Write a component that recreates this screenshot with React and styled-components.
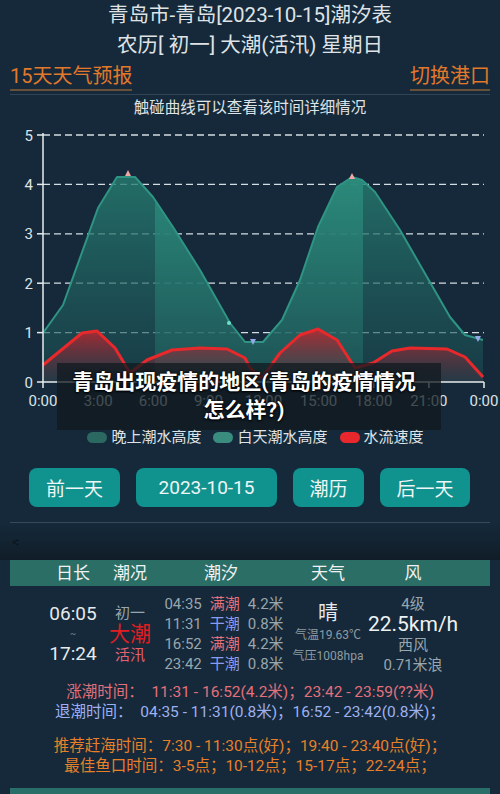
import React from "react";
import styled, { createGlobalStyle } from "styled-components";

const GlobalStyle = createGlobalStyle`
  html, body { margin: 0; padding: 0; background: #15293a; }
  body { font-family: Roboto, "Noto Sans CJK SC", sans-serif; }
`;

const Page = styled.div`
  width: 500px;
  height: 794px;
  overflow: hidden;
  background: #15293a;
  color: #dfe3e6;
`;

const Title = styled.div`
  text-align: center;
  font-size: 20.5px;
  line-height: 30px;
  color: #dfe3e6;
  white-space: nowrap;
`;

const LinksRow = styled.div`
  display: flex;
  justify-content: space-between;
  margin: 0 10px;
  padding-bottom: 3px;
  border-bottom: 1px solid #2f4556;
`;

const Link = styled.div`
  font-size: 20px;
  line-height: 24px;
  padding: 4px 0 1px;
  color: #e2782a;
  border-bottom: 2px solid #6a5036;
`;

const Hint = styled.div`
  text-align: center;
  font-size: 15.5px;
  line-height: 20px;
  margin-top: 3px;
  color: #dfe3e6;
`;

const ChartWrap = styled.div`
  position: relative;
  height: 309px;
`;

const ChartSvg = styled.svg`
  display: block;
`;

const Overlay = styled.div`
  position: absolute;
  top: 245px;
  left: 57px;
  width: 384px;
  height: 67px;
  box-sizing: border-box;
  padding-top: 5px;
  padding-right: 10px;
  background: rgba(16, 24, 30, 0.74);
  text-align: center;
  font-size: 21px;
  line-height: 28px;
  font-weight: 700;
  color: #ffffff;
  text-shadow: 0 0 3px #000, 0 1px 2px #000;
  white-space: nowrap;
`;

const Legend = styled.div`
  display: flex;
  justify-content: center;
  padding-left: 11px;
  gap: 12px;
  font-size: 15px;
  line-height: 20px;
  color: #dfe3e6;
`;

const LegendItem = styled.div`
  display: flex;
  align-items: center;
  gap: 4px;
`;

const Swatch = styled.span`
  display: inline-block;
  width: 20px;
  height: 11px;
  border-radius: 6px;
  background: ${(p) => p.$color};
`;

const ButtonRow = styled.div`
  display: flex;
  gap: 16px;
  margin-top: 21px;
  padding-left: 29px;
`;

const Button = styled.div`
  width: ${(p) => p.$w}px;
  height: 39px;
  border-radius: 8px;
  background: #10928f;
  color: #eef6f6;
  font-size: 19px;
  display: flex;
  align-items: center;
  justify-content: center;
`;

const Divider = styled.div`
  margin: 15px 10px 0;
  height: 1px;
  background: #34495a;
`;

const BackRow = styled.div`
  height: 37px;
  padding-left: 12px;
  display: flex;
  align-items: center;
  font-size: 15px;
  color: #0b141b;
  background: linear-gradient(#15293a, #101d28);
`;

const gridCols = `
  display: grid;
  grid-template-columns: 66px 48px 134px 80px 90px;
  padding-left: 30px;
`;

const TableHead = styled.div`
  ${gridCols}
  margin: 0 10px;
  height: 26px;
  background: #2a6e66;
  font-size: 17px;
  line-height: 26px;
  color: #f0f2f2;
  text-align: center;
`;

const DataRow = styled.div`
  ${gridCols}
  margin: 6px 10px 0;
  height: 84px;
`;

const Col = styled.div`
  display: flex;
  flex-direction: column;
  align-items: center;
  justify-content: center;
  white-space: nowrap;
`;

const Txt = styled.span`
  font-size: ${(p) => p.$s || 15}px;
  line-height: ${(p) => p.$lh || 20}px;
  color: ${(p) => p.$c || "#9aa6ad"};
`;

const TideGrid = styled.div`
  display: grid;
  grid-template-columns: auto auto auto;
  column-gap: 8px;
  font-size: 15px;
  line-height: 20px;
  color: #9aa6ad;
  padding-left: 6px;
`;

const TideStatus = styled.span`
  color: ${(p) => (p.$high ? "#e8707a" : "#8b9cf0")};
`;

const InfoBlock = styled.div`
  margin-top: ${(p) => p.$mt}px;
  text-align: center;
  font-size: 15.5px;
  line-height: 20px;
  white-space: pre;
`;

const InfoLine = styled.div`
  color: ${(p) => p.$c};
`;

const BottomBar = styled.div`
  margin: 12px 10px 0;
  height: 6px;
  background: #2a6e6a;
`;

const green = [
  [43, 333], [63, 305], [98, 208], [117, 177], [128, 177], [135, 177], [153, 197],
  [173, 227], [200, 270], [230, 323], [245, 342], [263, 342], [282, 320], [300, 280],
  [318, 227], [337, 187], [352, 177], [362, 180], [375, 192], [400, 230], [427, 277],
  [450, 317], [465, 335], [483, 340],
];

const red = [
  [43, 365], [82, 333], [97, 331], [115, 348], [130, 373], [147, 360], [172, 350],
  [200, 348], [227, 349], [245, 358], [250, 368], [262, 378], [280, 353], [300, 335],
  [318, 329], [337, 340], [355, 368], [373, 363], [392, 351], [410, 348], [447, 349],
  [465, 357], [483, 377],
];

const toLine = (pts) => pts.map((p) => p.join(",")).join(" ");
const toArea = (pts) =>
  `M43,382 L${pts.map((p) => p.join(",")).join(" L")} L483,382 Z`;

const yLevels = [0, 1, 2, 3, 4, 5];
const yOf = (v) => 382 - v * 49.4;
const xLabels = ["0:00", "3:00", "6:00", "9:00", "12:00", "15:00", "18:00", "21:00", "0:00"];
const xOf = (i) => 43 + i * 55.125;

function Chart() {
  return (
    <ChartSvg width="500" height="309" viewBox="0 118 500 309">
      <defs>
        <linearGradient id="night" x1="0" y1="170" x2="0" y2="382" gradientUnits="userSpaceOnUse">
          <stop offset="0" stopColor="#278173" stopOpacity="0.8" />
          <stop offset="1" stopColor="#1b4c52" stopOpacity="0.55" />
        </linearGradient>
        <linearGradient id="day" x1="0" y1="170" x2="0" y2="382" gradientUnits="userSpaceOnUse">
          <stop offset="0" stopColor="#2c8f7e" stopOpacity="0.9" />
          <stop offset="1" stopColor="#21615f" stopOpacity="0.6" />
        </linearGradient>
        <linearGradient id="redFill" x1="0" y1="328" x2="0" y2="382" gradientUnits="userSpaceOnUse">
          <stop offset="0" stopColor="#c8242c" stopOpacity="0.85" />
          <stop offset="1" stopColor="#6a2a3a" stopOpacity="0.15" />
        </linearGradient>
        <clipPath id="dayClip">
          <rect x="155" y="120" width="208" height="262" />
        </clipPath>
      </defs>

      {yLevels.slice(1).map((v) => (
        <line key={v} x1="43" x2="484" y1={yOf(v)} y2={yOf(v)} stroke="#d4dde0" strokeWidth="1.3" strokeDasharray="7 4" />
      ))}

      <path d={toArea(green)} fill="url(#night)" />
      <path d={toArea(green)} fill="url(#day)" clipPath="url(#dayClip)" />
      <polyline points={toLine(green)} fill="none" stroke="#2f9483" strokeWidth="2" strokeLinejoin="round" />

      <path d={toArea(red)} fill="url(#redFill)" />
      <polyline points={toLine(red)} fill="none" stroke="#e8292c" strokeWidth="3" strokeLinejoin="round" />

      <path d="M125,176 L128,170 L131,176 Z" fill="#f2a6a6" />
      <path d="M349,179 L352,173 L355,179 Z" fill="#f2a6a6" />
      <path d="M250,339 L256,339 L253,345 Z" fill="#95a8e8" />
      <path d="M475,336 L481,336 L478,342 Z" fill="#95a8e8" />
      <circle cx="229" cy="323" r="2" fill="#6fe0cc" />

      <line x1="43" x2="43" y1="133" y2="382" stroke="#e6ecee" strokeWidth="1.5" />
      <line x1="43" x2="484" y1="382" y2="382" stroke="#e6ecee" strokeWidth="1.5" />
      {yLevels.map((v) => (
        <g key={v}>
          <line x1="37" x2="43" y1={yOf(v)} y2={yOf(v)} stroke="#e6ecee" strokeWidth="1.5" />
          <text x="33" y={yOf(v) + 5.5} textAnchor="end" fontSize="15" fill="#dde3e6" fontFamily="Roboto, sans-serif">
            {v}
          </text>
        </g>
      ))}
      {xLabels.map((l, i) => (
        <g key={i}>
          <line x1={xOf(i)} x2={xOf(i)} y1="382" y2="388" stroke="#e6ecee" strokeWidth="1.5" />
          <text x={xOf(i)} y="406" textAnchor="middle" fontSize="15" fill="#dde3e6" fontFamily="Roboto, sans-serif">
            {l}
          </text>
        </g>
      ))}
    </ChartSvg>
  );
}

const tides = [
  ["04:35", "满潮", "4.2米", true],
  ["11:31", "干潮", "0.8米", false],
  ["16:52", "满潮", "4.2米", true],
  ["23:42", "干潮", "0.8米", false],
];

export default function App() {
  return (
    <Page>
      <GlobalStyle />
      <Title>青岛市-青岛[2023-10-15]潮汐表</Title>
      <Title>农历[ 初一] 大潮(活汛) 星期日</Title>
      <LinksRow>
        <Link>15天天气预报</Link>
        <Link>切换港口</Link>
      </LinksRow>
      <Hint>触碰曲线可以查看该时间详细情况</Hint>
      <ChartWrap>
        <Chart />
        <Overlay>
          青岛出现疫情的地区(青岛的疫情情况
          <br />
          怎么样?)
        </Overlay>
      </ChartWrap>
      <Legend>
        <LegendItem>
          <Swatch $color="#2a6861" />
          晚上潮水高度
        </LegendItem>
        <LegendItem>
          <Swatch $color="#3a8c7e" />
          白天潮水高度
        </LegendItem>
        <LegendItem>
          <Swatch $color="#e8282c" />
          水流速度
        </LegendItem>
      </Legend>
      <ButtonRow>
        <Button $w={91}>前一天</Button>
        <Button $w={141}>2023-10-15</Button>
        <Button $w={71}>潮历</Button>
        <Button $w={90}>后一天</Button>
      </ButtonRow>
      <Divider />
      <BackRow>&lt;</BackRow>
      <TableHead>
        <div>日长</div>
        <div>潮况</div>
        <div>潮汐</div>
        <div>天气</div>
        <div>风</div>
      </TableHead>
      <DataRow>
        <Col>
          <Txt $s={19} $c="#e6eaec">06:05</Txt>
          <Txt $s={9} $c="#7f8a90">~</Txt>
          <Txt $s={19} $c="#e6eaec">17:24</Txt>
        </Col>
        <Col>
          <Txt $c="#9aa6ad">初一</Txt>
          <Txt $s={21} $lh={22} $c="#e01e22">大潮</Txt>
          <Txt $c="#e8606e">活汛</Txt>
        </Col>
        <Col>
          <TideGrid>
            {tides.map(([t, s, h, hi]) => (
              <React.Fragment key={t}>
                <span>{t}</span>
                <TideStatus $high={hi}>{s}</TideStatus>
                <span>{h}</span>
              </React.Fragment>
            ))}
          </TideGrid>
        </Col>
        <Col>
          <Txt $s={20} $lh={24} $c="#e6eaec">晴</Txt>
          <Txt $s={12} $c="#8f9ba2">气温19.63℃</Txt>
          <Txt $s={12} $lh={22} $c="#8f9ba2">气压1008hpa</Txt>
        </Col>
        <Col>
          <Txt $c="#9aa6ad">4级</Txt>
          <Txt $s={21} $lh={21} $c="#eef1f2">22.5km/h</Txt>
          <Txt $c="#9aa6ad">西风</Txt>
          <Txt $c="#9aa6ad">0.71米浪</Txt>
        </Col>
      </DataRow>
      <InfoBlock $mt={6}>
        <InfoLine $c="#e3707a">{"涨潮时间：  11:31 - 16:52(4.2米)；23:42 - 23:59(??米)"}</InfoLine>
        <InfoLine $c="#9fb0f0">{"退潮时间：  04:35 - 11:31(0.8米)；16:52 - 23:42(0.8米)；"}</InfoLine>
      </InfoBlock>
      <InfoBlock $mt={14}>
        <InfoLine $c="#e8802a">{"推荐赶海时间：7:30 - 11:30点(好)；19:40 - 23:40点(好)；"}</InfoLine>
        <InfoLine $c="#e8802a">{"最佳鱼口时间：3-5点；10-12点；15-17点；22-24点；"}</InfoLine>
      </InfoBlock>
      <BottomBar />
    </Page>
  );
}
